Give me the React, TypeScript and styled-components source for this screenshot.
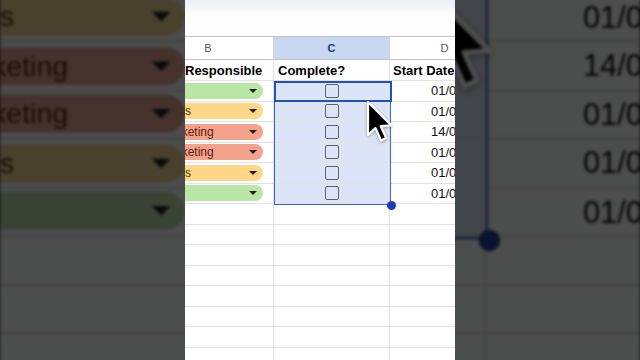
import React from 'react'
import styled, { createGlobalStyle, css } from 'styled-components'

const GlobalStyle = createGlobalStyle`
  html, body {
    margin: 0;
    padding: 0;
    background: #111;
  }
  * {
    box-sizing: border-box;
  }
`

type Tone = 'green' | 'yellow' | 'salmon'

const tones: Record<Tone, { bg: string; fg: string }> = {
  green: { bg: '#b9e6a7', fg: '#1f4a14' },
  yellow: { bg: '#fdd688', fg: '#4a3200' },
  salmon: { bg: '#f4a28b', fg: '#5a1f10' },
}

const rows: { team: string; tone: Tone; date: string }[] = [
  { team: 'HR', tone: 'green', date: '01/03/2024' },
  { team: 'Sales', tone: 'yellow', date: '01/03/2024' },
  { team: 'Marketing', tone: 'salmon', date: '14/03/2024' },
  { team: 'Marketing', tone: 'salmon', date: '01/03/2024' },
  { team: 'Sales', tone: 'yellow', date: '01/03/2024' },
  { team: 'HR', tone: 'green', date: '01/03/2024' },
]

const EMPTY_ROWS = 8

const Stage = styled.div`
  position: relative;
  width: 640px;
  height: 360px;
  overflow: hidden;
  display: flex;
  justify-content: center;
  background: #111;
  font-family: 'Liberation Sans', Arial, sans-serif;
`

// blurred, darkened zoom of the same sheet behind the portrait frame
const Backdrop = styled.div`
  position: absolute;
  inset: 0;
  display: flex;
  justify-content: center;
  transform: scale(2.37);
  filter: blur(0.7px) brightness(0.3) saturate(0.8);
  pointer-events: none;
`

const Frame = styled.div`
  position: relative;
  width: 270px;
  height: 360px;
  overflow: hidden;
  background: #fff;
  flex-shrink: 0;
`

const TopBar = styled.div`
  height: 37px;
  background: linear-gradient(180deg, #edf0f7 0px, #f3f5f9 8px, #fdfdfd 14px, #ffffff 100%);
  border-bottom: 1px solid #c4c4c4;
`

const Viewport = styled.div`
  position: relative;
  margin-left: -42px;
  width: 357px;
`

const Grid = styled.div`
  display: grid;
  grid-template-columns: 131px 116px 110px;
  grid-template-rows: 23px 21px repeat(${rows.length + EMPTY_ROWS}, 20.5px);
`

const Cell = styled.div<{ $selected?: boolean; $align?: 'left' | 'center' | 'right' }>`
  display: flex;
  align-items: center;
  justify-content: ${({ $align = 'left' }) =>
    $align === 'center' ? 'center' : $align === 'right' ? 'flex-end' : 'flex-start'};
  border-right: 1px solid #e2e2e2;
  border-bottom: 1px solid #e2e2e2;
  background: ${({ $selected }) => ($selected ? '#dbe5f7' : '#fff')};
  font-size: 13px;
  color: #111;
  white-space: nowrap;
  overflow: hidden;
  padding: 0 3px;
`

const LetterCell = styled(Cell)<{ $active?: boolean }>`
  justify-content: center;
  font-size: 11px;
  color: #555;
  border-bottom: 1px solid #c4c4c4;
  border-right: 1px solid #d4d4d4;
  ${({ $active }) =>
    $active &&
    css`
      background: #c8d7f4;
      color: #1d3b77;
      font-weight: 700;
    `}
`

const HeadCell = styled(Cell)<{ $indent?: number }>`
  font-weight: 700;
  color: #000;
  padding-left: ${({ $indent = 3 }) => $indent}px;
`

const ChipCell = styled(Cell)`
  padding: 0;
`

const Chip = styled.div<{ $tone: Tone }>`
  flex: 1;
  height: 16px;
  margin: 0 10px 0 12px;
  padding: 0 6px 0 6px;
  border-radius: 8px;
  display: flex;
  align-items: center;
  justify-content: space-between;
  font-size: 12px;
  background: ${({ $tone }) => tones[$tone].bg};
  color: ${({ $tone }) => tones[$tone].fg};
`

const Caret = styled.span`
  width: 0;
  height: 0;
  border-left: 4px solid transparent;
  border-right: 4px solid transparent;
  border-top: 4.5px solid #202020;
`

const Checkbox = styled.span`
  width: 14px;
  height: 14px;
  border: 1.8px solid #5f6368;
  border-radius: 2px;
  background: transparent;
`

const Selection = styled.div<{ $rows: number }>`
  position: absolute;
  left: 131px;
  top: 44px;
  width: 117px;
  height: ${({ $rows }) => $rows * 20.5 + 1}px;
  border: 1.5px solid #3b63c8;
  pointer-events: none;
`

const ActiveCell = styled.div`
  height: 21.5px;
  border: 2px solid #2450bf;
  margin: -1.5px;
`

const FillHandle = styled.span`
  position: absolute;
  right: -5.5px;
  bottom: -5.5px;
  width: 9px;
  height: 9px;
  border-radius: 50%;
  background: #1b3fb3;
`

const Pointer = styled.svg`
  position: absolute;
  left: 222px;
  top: 62px;
  filter: drop-shadow(0 1px 1.5px rgba(0, 0, 0, 0.35));
`

function Sheet() {
  return (
    <Frame>
      <TopBar />
      <Viewport>
        <Grid>
          <LetterCell>B</LetterCell>
          <LetterCell $active>C</LetterCell>
          <LetterCell>D</LetterCell>

          <HeadCell $indent={42}>Responsible</HeadCell>
          <HeadCell $indent={4}>Complete?</HeadCell>
          <HeadCell>Start Date</HeadCell>

          {rows.map((row, i) => (
            <React.Fragment key={i}>
              <ChipCell>
                <Chip $tone={row.tone}>
                  <span>{row.team}</span>
                  <Caret />
                </Chip>
              </ChipCell>
              <Cell $selected $align='center'>
                <Checkbox />
              </Cell>
              <Cell $align='right'>{row.date}</Cell>
            </React.Fragment>
          ))}

          {Array.from({ length: EMPTY_ROWS }).map((_, i) => (
            <React.Fragment key={'e' + i}>
              <Cell />
              <Cell />
              <Cell />
            </React.Fragment>
          ))}
        </Grid>

        <Selection $rows={rows.length}>
          <ActiveCell />
          <FillHandle />
        </Selection>

        <Pointer width='30' height='44' viewBox='-3 -3 30 44'>
          <path
            d='M0 0 L0 33 L7.4 26 L13 38.4 L18.2 36 L12.8 24.2 L23.4 23.4 Z'
            fill='#000'
            stroke='#fff'
            strokeWidth='2.2'
            strokeLinejoin='round'
          />
        </Pointer>
      </Viewport>
    </Frame>
  )
}

export default function App() {
  return (
    <>
      <GlobalStyle />
      <Stage>
        <Backdrop aria-hidden>
          <Sheet />
        </Backdrop>
        <Sheet />
      </Stage>
    </>
  )
}
